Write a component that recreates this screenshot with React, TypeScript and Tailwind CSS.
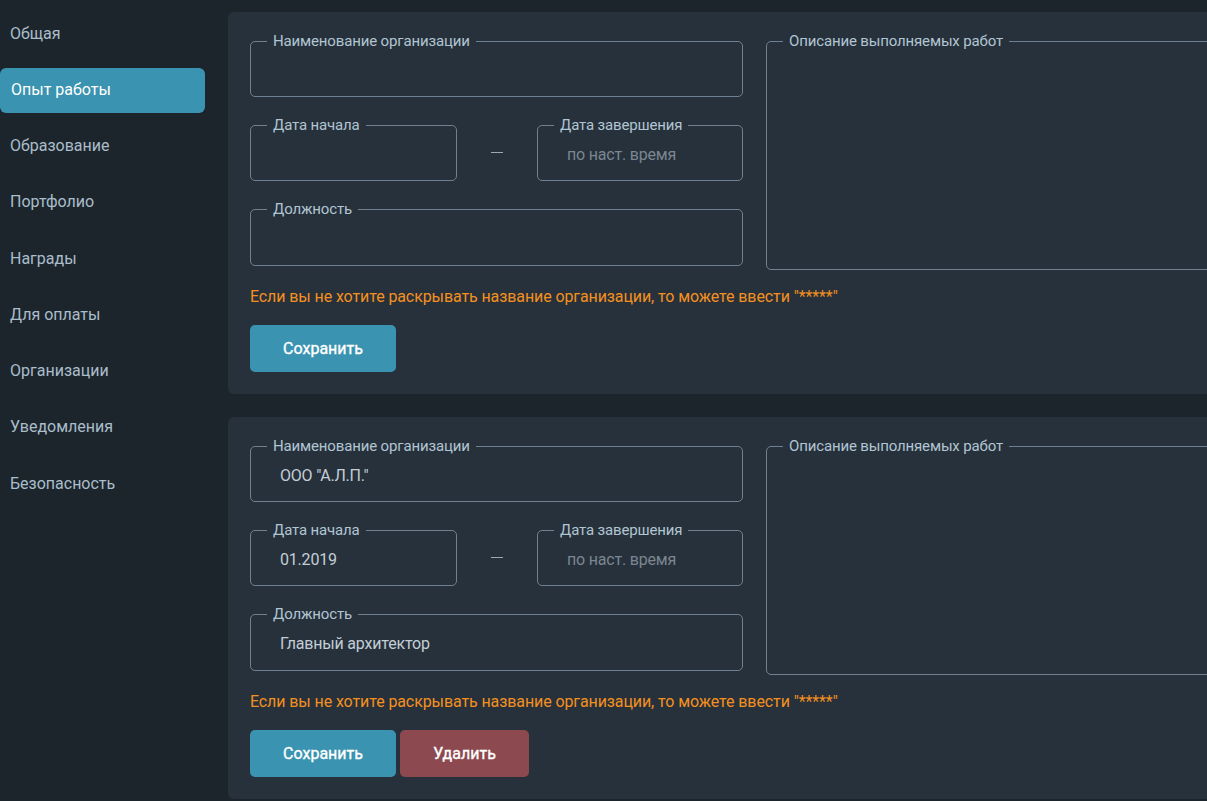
import React from "react";

const navItems = [
  "Общая",
  "Опыт работы",
  "Образование",
  "Портфолио",
  "Награды",
  "Для оплаты",
  "Организации",
  "Уведомления",
  "Безопасность",
];

function Field({
  label,
  value,
  placeholder,
  className = "",
  h = "h-[46px]",
}: {
  label: string;
  value?: string;
  placeholder?: string;
  className?: string;
  h?: string;
}) {
  return (
    <fieldset
      className={`border border-[#6f8191] rounded-[5px] min-w-0 ${className}`}
    >
      <legend className="ml-[16px] px-[6px] text-[15px] leading-[16px] text-[#b1c5d3] tracking-[-0.15px]">
        {label}
      </legend>
      <div
        className={`${h} flex items-start pt-[13px] pl-[29px] text-[16px] leading-[18px] tracking-[-0.2px] ${
          value ? "text-[#c3ced7]" : "text-[#7a8691]"
        }`}
      >
        {value ?? placeholder ?? ""}
      </div>
    </fieldset>
  );
}

function Card({
  org,
  start,
  position,
  withDelete,
}: {
  org?: string;
  start?: string;
  position?: string;
  withDelete?: boolean;
}) {
  return (
    <section className="w-[1300px] bg-[#27313b] rounded-[6px] pl-[22px] pt-[21px] pb-[22px]">
      <div className="flex gap-[23px]">
        <div className="w-[493px] flex flex-col gap-[20px]">
          <Field label="Наименование организации" value={org} h="h-[47px]" />
          <div className="flex items-center">
            <Field
              label="Дата начала"
              value={start}
              className="w-[207px]"
              h="h-[47px]"
            />
            <div className="flex-1 flex justify-center pt-[6px]">
              <span className="block w-[12px] h-px bg-[#9aa9b5]" />
            </div>
            <Field
              label="Дата завершения"
              placeholder="по наст. время"
              className="w-[206px]"
              h="h-[47px]"
            />
          </div>
          <Field label="Должность" value={position} h="h-[48px]" />
        </div>
        <fieldset className="w-[493px] border border-[#6f8191] rounded-[5px] h-[237px]">
          <legend className="ml-[16px] px-[6px] text-[15px] leading-[16px] text-[#b1c5d3] tracking-[-0.15px]">
            Описание выполняемых работ
          </legend>
        </fieldset>
      </div>
      <p className="mt-[17px] text-[16px] leading-[20px] text-[#f4901f] tracking-[-0.1px]">
        Если вы не хотите раскрывать название организации, то можете ввести
        "*****"
      </p>
      <div className="mt-[18px] flex gap-[4px]">
        <button className="w-[146px] h-[47px] rounded-[5px] bg-[#3a93b0] text-white text-[16px] font-normal [-webkit-text-stroke:0.35px_white]">
          Сохранить
        </button>
        {withDelete && (
          <button className="w-[129px] h-[47px] rounded-[5px] bg-[#8c4a50] text-white text-[16px] font-normal [-webkit-text-stroke:0.35px_white]">
            Удалить
          </button>
        )}
      </div>
    </section>
  );
}

export default function App() {
  return (
    <div className="w-[1207px] h-[801px] overflow-hidden bg-[#1d252c] flex font-['Roboto',sans-serif]">
      <nav className="w-[205px] shrink-0 flex flex-col gap-[11.25px] pt-[12px]">
        {navItems.map((item, i) =>
          i === 1 ? (
            <div
              key={item}
              className="h-[45px] flex items-center pl-[11px] pb-[1px] rounded-[6px] bg-[#3a93b0] text-white text-[16px]"
            >
              {item}
            </div>
          ) : (
            <div
              key={item}
              className="h-[45px] flex items-center pl-[10px] pb-[2px] text-[#a9bdcb] text-[16px]"
            >
              {item}
            </div>
          )
        )}
      </nav>
      <main className="ml-[23px] pt-[12px] flex flex-col gap-[23px] shrink-0">
        <Card />
        <Card
          org={'ООО "А.Л.П."'}
          start="01.2019"
          position="Главный архитектор"
          withDelete
        />
      </main>
    </div>
  );
}
